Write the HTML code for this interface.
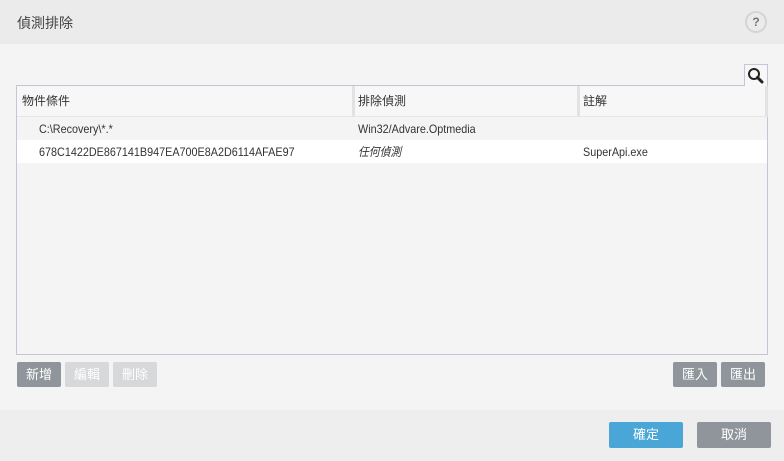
<!DOCTYPE html>
<html><head><meta charset="utf-8"><style>
*{margin:0;padding:0;box-sizing:border-box}
body{width:784px;height:461px;overflow:hidden;background:#f4f4f4;font-family:"Liberation Sans","Noto Sans CJK TC",sans-serif;font-size:12px;color:#333;position:relative}
.abs{position:absolute}
.hdr{left:0;top:0;width:784px;height:44px;background:#ebebeb}
.ttl{left:17px;top:13px;font-size:14px;color:#444}
.help{left:745px;top:11px;width:22px;height:22px;border:2px solid #d4d4d4;border-radius:50%;text-align:center;line-height:18px;font-weight:bold;color:#777;font-size:12px}
.box{left:16px;top:85px;width:752px;height:270px;border:1px solid #c8c4d8;background:#f4f4f4}
.search{left:744px;top:64px;width:24px;height:22px;border:1px solid #c8c4d8;border-bottom:none;background:#f7f7f7}
.th{top:86px;height:31px;background:#f7f7f7;border-bottom:1px solid #e6e6e6;line-height:30px;padding-left:5px;color:#333}
.sep{top:86px;width:3px;height:31px;background:#e2e2e2}
.row{left:17px;width:750px;height:23px;line-height:24px}
.c{position:absolute;font-size:12px;transform:scaleX(0.9);transform-origin:left center;white-space:nowrap}
.btn{height:25px;line-height:25px;text-align:center;color:#fff;border-radius:2px;font-size:13px}
.g{background:#8f959b}.l{background:#d6d8da}
.ft{left:0;top:410px;width:784px;height:51px;background:#eeeeee}
</style></head><body>
<div class="abs hdr"></div>
<div class="abs ttl">偵測排除</div>
<div class="abs help">?</div>
<div class="abs box"></div>
<div class="abs search"><svg width="22" height="20" viewBox="0 0 22 20"><circle cx="9" cy="9" r="5" fill="none" stroke="#222" stroke-width="2"/><path d="M12.5 12.5L17 17" stroke="#222" stroke-width="3" stroke-linecap="round"/></svg></div>
<div class="abs th" style="left:17px;width:336px">物件條件</div>
<div class="abs th" style="left:353px;width:225px">排除偵測</div>
<div class="abs th" style="left:578px;width:189px">註解</div>
<div class="abs sep" style="left:352px"></div>
<div class="abs sep" style="left:577px"></div>
<div class="abs sep" style="left:765px"></div>
<div class="abs row" style="top:117px;background:#f4f4f4"><span class="c" style="left:22px">C:\Recovery\*.*</span><span class="c" style="left:341px">Win32/Advare.Optmedia</span></div>
<div class="abs row" style="top:140px;background:#fff"><span class="c" style="left:22px">678C1422DE867141B947EA700E8A2D6114AFAE97</span><span class="c" style="left:341px;font-style:italic">任何偵測</span><span class="c" style="left:566px">SuperApi.exe</span></div>
<div class="abs btn g" style="left:17px;top:362px;width:44px">新增</div>
<div class="abs btn l" style="left:65px;top:362px;width:44px">編輯</div>
<div class="abs btn l" style="left:113px;top:362px;width:44px">刪除</div>
<div class="abs btn g" style="left:673px;top:362px;width:44px">匯入</div>
<div class="abs btn g" style="left:721px;top:362px;width:44px">匯出</div>
<div class="abs ft"></div>
<div class="abs btn" style="left:609px;top:422px;width:74px;height:26px;line-height:26px;background:#4aa6d6">確定</div>
<div class="abs btn g" style="left:697px;top:422px;width:74px;height:26px;line-height:26px">取消</div>
</body></html>
